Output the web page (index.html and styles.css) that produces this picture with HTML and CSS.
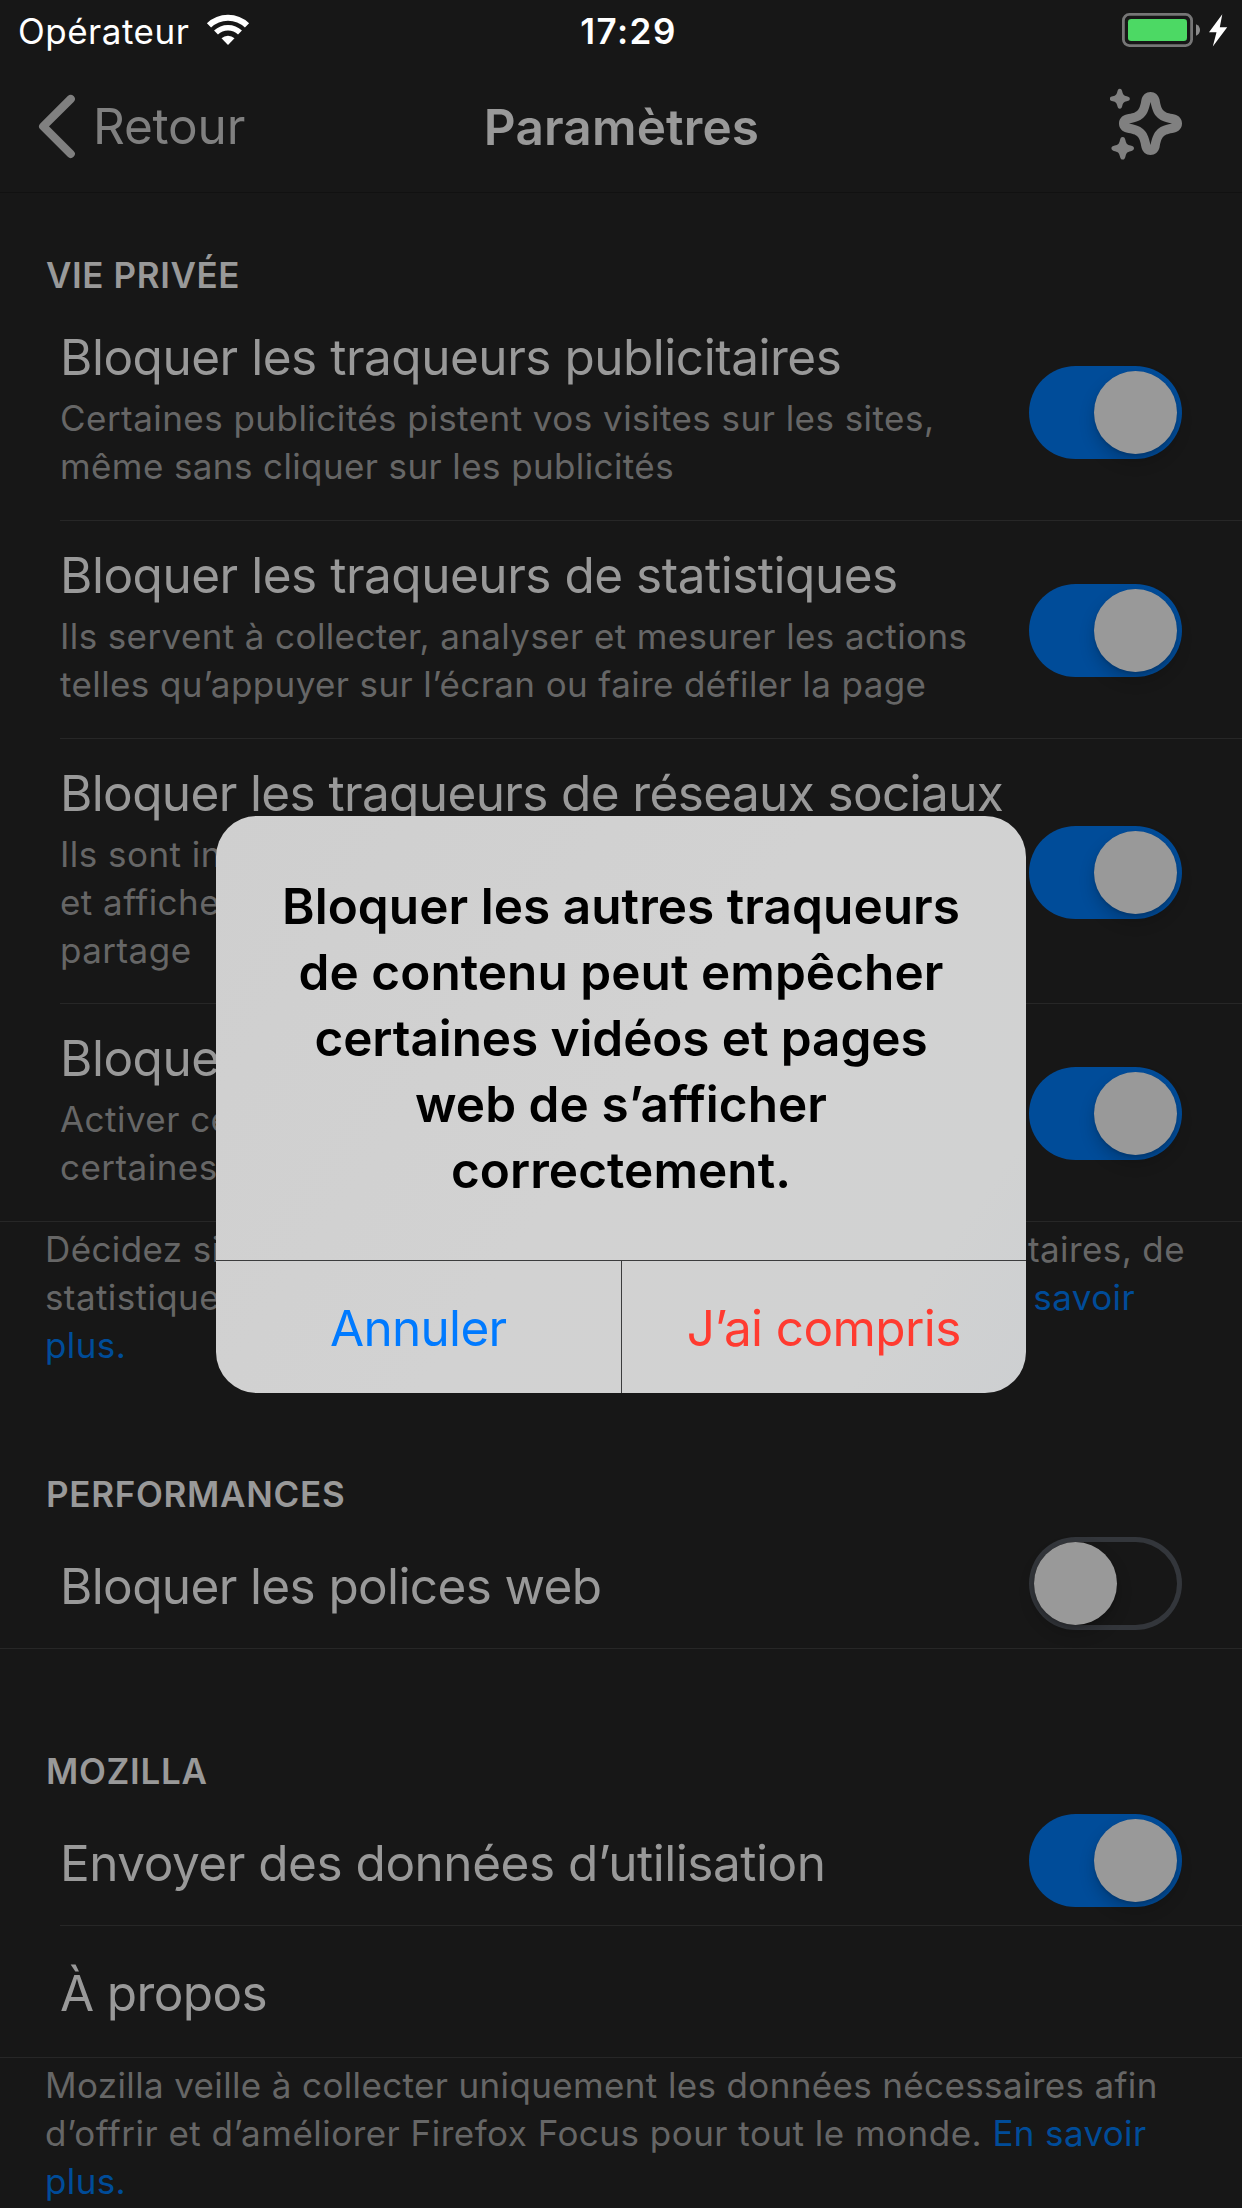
FILE: index.html
```html
<!DOCTYPE html>
<html lang="fr">
<head>
<meta charset="utf-8">
<title>Paramètres</title>
<link rel="stylesheet" href="styles.css">
</head>
<body>
<div class="screen">
  <header class="status-bar">
    <div class="carrier">
      <span>Opérateur</span>
      <svg class="wifi" width="44" height="32" viewBox="-22 -31 44 32" fill="none" stroke="#fff">
        <path d="M-19-19.6A27.3 27.3 0 0 1 19-19.6" stroke-width="6"/>
        <path d="M-12-12.4A17.2 17.2 0 0 1 12-12.4" stroke-width="5.6"/>
        <path d="M0 0L-6.5-6.7A9.3 9.3 0 0 1 6.5-6.7Z" fill="#fff" stroke="none"/>
      </svg>
    </div>
    <div class="clock">17:29</div>
    <div class="power">
      <svg width="106" height="34" viewBox="0 0 106 34">
        <rect x="1.4" y="1.4" width="68.2" height="31.2" rx="6" fill="none" stroke="#767676" stroke-width="2.8"/>
        <rect x="6" y="6" width="59" height="22" rx="3.2" fill="#4cd964"/>
        <path d="M74 11.2Q78 13 78 17T74 22.8Z" fill="#8b8b8b"/>
        <path d="M100.3 1.3L87 19.3H94.5L90.8 33.6L105.2 14.2H97.8Z" fill="#fff"/>
      </svg>
    </div>
  </header>

  <nav class="nav-bar">
    <div class="back">
      <svg width="40" height="66" viewBox="0 0 40 66" fill="none" stroke="#808080" stroke-width="8.2" stroke-linecap="round" stroke-linejoin="round"><path d="M35.7 6L8.2 33.4L35.7 60.8"/></svg>
      <span>Retour</span>
    </div>
    <h1 class="nav-title">Paramètres</h1>
    <div class="whats-new">
      <svg width="74" height="74" viewBox="1110 86 74 74" fill="#808080">
        <path fill-rule="evenodd" transform="translate(1150.5 123.5)" d="M0-31.5C4.5-31.5 8-28.5 9-24C10-18 11-15 13-13C15-11 18-10 24-9C28.5-8 31.5-4.5 31.5 0C31.5 4.5 28.5 8 24 9C18 10 15 11 13 13C11 15 10 18 9 24C8 28.5 4.5 31.5 0 31.5C-4.5 31.5-8 28.5-9 24C-10 18-11 15-13 13C-15 11-18 10-24 9C-28.5 8-31.5 4.5-31.5 0C-31.5-4.5-28.5-8-24-9C-18-10-15-11-13-13C-11-15-10-18-9-24C-8-28.5-4.5-31.5 0-31.5ZM0-21.5C-2-12-4-9-6.5-6.5C-9-4-12-2-21.5 0C-12 2-9 4-6.5 6.5C-4 9-2 12 0 21.5C2 12 4 9 6.5 6.5C9 4 12 2 21.5 0C12-2 9-4 6.5-6.5C4-9 2-12 0-21.5Z"/>
        <path transform="translate(1119.8 98.7)" d="M0-10C1.5-10 2-9 2.5-7C3.2-4 4-3.2 7-2.5C9-2 10-1.5 10 0C10 1.5 9 2 7 2.5C4 3.2 3.2 4 2.5 7C2 9 1.5 10 0 10C-1.5 10-2 9-2.5 7C-3.2 4-4 3.2-7 2.5C-9 2-10 1.5-10 0C-10-1.5-9-2-7-2.5C-4-3.2-3.2-4-2.5-7C-2-9-1.5-10 0-10Z"/>
        <path transform="translate(1122.7 148.3) scale(1.13)" d="M0-10C1.5-10 2-9 2.5-7C3.2-4 4-3.2 7-2.5C9-2 10-1.5 10 0C10 1.5 9 2 7 2.5C4 3.2 3.2 4 2.5 7C2 9 1.5 10 0 10C-1.5 10-2 9-2.5 7C-3.2 4-4 3.2-7 2.5C-9 2-10 1.5-10 0C-10-1.5-9-2-7-2.5C-4-3.2-3.2-4-2.5-7C-2-9-1.5-10 0-10Z"/>
      </svg>
    </div>
  </nav>

  <main>
    <section>
      <h2 class="section-title section-title--first">VIE PRIVÉE</h2>
      <div class="row">
        <div class="row-text">
          <div class="row-title">Bloquer les traqueurs publicitaires</div>
          <div class="row-detail">Certaines publicités pistent vos visites sur les sites,<br><span class="row-detail--snug">même sans cliquer sur les publicités</span></div>
        </div>
        <div class="switch on"><span class="knob"></span></div>
      </div>
      <div class="row">
        <div class="row-text">
          <div class="row-title">Bloquer les traqueurs de statistiques</div>
          <div class="row-detail row-detail--snug">Ils servent à collecter, analyser et mesurer les actions<br>telles qu’appuyer sur l’écran ou faire défiler la page</div>
        </div>
        <div class="switch on"><span class="knob"></span></div>
      </div>
      <div class="row row--tall">
        <div class="row-text">
          <div class="row-title row-title--snug">Bloquer les traqueurs de réseaux sociaux</div>
          <div class="row-detail">Ils sont intégrés aux sites pour suivre vos visites<br>et afficher des fonctions telles que les boutons de<br>partage</div>
        </div>
        <div class="switch on"><span class="knob"></span></div>
      </div>
      <div class="row row--last">
        <div class="row-text">
          <div class="row-title">Bloquer les autres traqueurs</div>
          <div class="row-detail">Activer ceci peut empêcher l’affichage de<br>certaines vidéos et pages web</div>
        </div>
        <div class="switch on"><span class="knob"></span></div>
      </div>
      <div class="footnote">
        <div class="footnote-line"><span>Décidez si vous voulez</span><span>autoriser les traqueurs publicitaires, de</span></div>
        <div class="footnote-line footnote-line--short"><span>statistiques et de réseaux sociaux</span><a class="link">En savoir</a></div>
        <a class="link">plus.</a>
      </div>
    </section>

    <section>
      <h2 class="section-title section-title--performance">PERFORMANCES</h2>
      <div class="row row--single row--last">
        <div class="row-title row-title--snug">Bloquer les polices web</div>
        <div class="switch"><span class="knob"></span></div>
      </div>
    </section>

    <section>
      <h2 class="section-title">MOZILLA</h2>
      <div class="row row--single">
        <div class="row-title">Envoyer des données d’utilisation</div>
        <div class="switch on"><span class="knob"></span></div>
      </div>
      <div class="row row--single row--last row--about">
        <div class="row-title row-title--snug">À propos</div>
      </div>
      <div class="footnote footnote--mozilla">Mozilla veille à collecter uniquement les données nécessaires afin<br><span class="spaced">d’offrir et d’améliorer Firefox Focus pour tout le monde. </span><a class="link">En savoir<br>plus.</a></div>
    </section>
  </main>

  <div class="alert" role="alertdialog">
    <p class="alert-title">Bloquer les autres traqueurs<br>de contenu peut empêcher<br><span class="alert-title-snug">certaines vidéos et pages</span><br>web de s’afficher<br>correctement.</p>
    <div class="alert-actions">
      <div class="alert-action">Annuler</div>
      <div class="alert-action alert-action--destructive">J’ai compris</div>
    </div>
  </div>
</div>
</body>
</html>
```
FILE: styles.css
```css
* { box-sizing: border-box; }

body {
  margin: 0;
  background: #171717;
  font-family: Inter, "Liberation Sans", sans-serif;
  font-kerning: normal;
}

.screen {
  position: relative;
  width: 1242px;
  height: 2208px;
  overflow: hidden;
  background: #171717;
  color: #999;
}

h1, h2, p { margin: 0; font-weight: 600; }

/* Status bar */
.status-bar {
  display: grid;
  grid-template-columns: 1fr auto 1fr;
  align-items: start;
  height: 60px;
  padding: 0 14px 0 18px;
  color: #fff;
  font-size: 35px;
  line-height: 62px;
}
.carrier { display: flex; letter-spacing: 0.5px; }
.wifi { margin: 14px 0 0 17px; }
.clock { font-weight: 600; letter-spacing: 1.5px; padding-left: 11px; }
.power { display: flex; justify-content: flex-end; padding-top: 13px; }

/* Navigation bar */
.nav-bar {
  display: grid;
  grid-template-columns: 1fr auto 1fr;
  align-items: center;
  height: 133px;
  padding: 0 58px 1px 35px;
  border-bottom: 1px solid #111;
  font-size: 49.5px;
  line-height: 62px;
}
.back { display: flex; align-items: center; gap: 18px; color: #808080; letter-spacing: -0.2px; }
.nav-title { font-size: 49.5px; letter-spacing: 0.15px; padding: 2px 0 0 24px; }
.whats-new { display: flex; justify-content: flex-end; padding-bottom: 6px; }

/* Settings list */
.section-title {
  display: flex;
  align-items: flex-end;
  height: 145px;
  padding: 0 46px 1px;
  font-size: 35px;
  line-height: 44px;
  letter-spacing: 0.7px;
}
.section-title--first { height: 110px; padding-bottom: 6px; letter-spacing: 0.6px; }
.section-title--performance { height: 148px; }

.row {
  display: flex;
  justify-content: space-between;
  align-items: center;
  height: 218px;
  margin-left: 60px;
  padding-right: 60px;
  border-bottom: 1px solid #272727;
}
.row--last { margin-left: 0; padding-left: 60px; }
.row--tall { height: 265px; }
.row-text { align-self: flex-start; padding-top: 23px; white-space: nowrap; }
.row-title { font-size: 49.5px; line-height: 62px; letter-spacing: -0.48px; white-space: nowrap; }
.row-title--snug { letter-spacing: -0.63px; }
.row-detail {
  margin-top: 6px;
  color: #666;
  font-size: 35px;
  line-height: 48px;
  letter-spacing: 0.46px;
}
.row-detail--snug { letter-spacing: 0.39px; }
.row--single { height: 132px; }
.row--single .row-title { padding-top: 7px; }
.row--about .row-title { padding-top: 2px; }

.footnote {
  padding: 3px 45px 0;
  color: #666;
  font-size: 35px;
  line-height: 48px;
  letter-spacing: 0.4px;
  white-space: nowrap;
}
.footnote--mozilla { padding-top: 3px; letter-spacing: 0.36px; }
.footnote-line { display: flex; justify-content: space-between; width: 1140px; }
.footnote-line--short { width: 1090px; }
.spaced { letter-spacing: 0.48px; }
.link { color: #004c99; }

/* Switches */
.switch {
  flex: none;
  display: flex;
  width: 153px;
  height: 93px;
  margin-top: 2px;
  padding: 5px;
  border-radius: 47px;
  box-shadow: inset 0 0 0 5px #33363b;
}
.knob {
  width: 83px;
  height: 83px;
  border-radius: 50%;
  background: #999;
  box-shadow: 0 8px 16px rgba(0, 0, 0, 0.2), 0 2px 3px rgba(0, 0, 0, 0.12);
}
.switch.on { justify-content: flex-end; background: #004c99; box-shadow: none; }

/* Alert over the list */
.alert {
  position: absolute;
  left: 216px;
  top: 816px;
  width: 810px;
  height: 577px;
  overflow: hidden;
  display: flex;
  flex-direction: column;
  border-radius: 41px;
  background: linear-gradient(125deg, #cfcfcf, #d2d2d2 50%, #d1d2d2 85%, #cdcfd1);
  color: #000;
  text-align: center;
  white-space: nowrap;
}
.alert-title { flex: 1; padding-top: 57px; font-size: 49.5px; line-height: 66px; letter-spacing: 0.05px; }
.alert-title-snug { letter-spacing: -0.09px; }
.alert-actions { display: flex; height: 133px; border-top: 1px solid #3b3c3d; }
.alert-action {
  flex: 1;
  padding-top: 1px;
  color: #007aff;
  font-size: 49.5px;
  line-height: 132px;
  letter-spacing: -0.7px;
}
.alert-action--destructive { border-left: 1px solid #3b3c3d; color: #ff3b30; letter-spacing: -0.6px; }
```
